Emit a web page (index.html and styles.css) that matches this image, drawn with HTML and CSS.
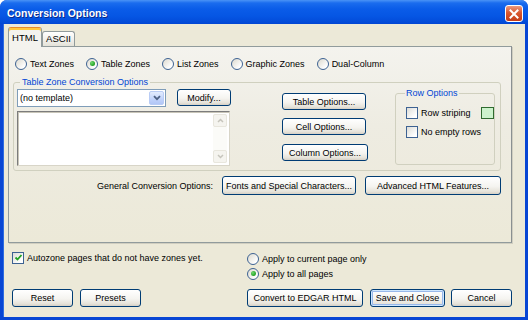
FILE: index.html
```html
<!DOCTYPE html>
<html lang="en">
<head>
  <meta charset="UTF-8" />
  <title>Conversion Options</title>
  <link rel="stylesheet" href="styles.css">
</head>
<body>

<div class="window">
  <div class="titlebar">
    <span class="title">Conversion Options</span>
    <button class="close-btn" title="Close">
      <svg width="10" height="10" viewBox="0 0 10 10"><path d="M1.5 1.5l7 7M8.5 1.5l-7 7" stroke="#fff" stroke-width="2" stroke-linecap="square"/></svg>
    </button>
  </div>

  <div class="client">
    <div class="tabs">
      <div class="tab active">HTML</div>
      <div class="tab">ASCII</div>
    </div>

    <div class="panel">
      <!-- zone type -->
      <div class="zone-row">
        <label class="radio"><span class="radio-dot"></span>Text Zones</label>
        <label class="radio checked"><span class="radio-dot"></span>Table Zones</label>
        <label class="radio"><span class="radio-dot"></span>List Zones</label>
        <label class="radio"><span class="radio-dot"></span>Graphic Zones</label>
        <label class="radio"><span class="radio-dot"></span>Dual-Column</label>
      </div>

      <fieldset class="group zone-group">
        <legend>Table Zone Conversion Options</legend>
        <div class="group-body">
          <div class="template-col">
            <div class="template-row">
              <div class="combo">
                <span>(no template)</span>
                <span class="combo-btn">
                  <svg width="8" height="6" viewBox="0 0 8 6"><path d="M1 1.2l3 3 3-3" stroke="#4D6185" stroke-width="1.8" fill="none"/></svg>
                </span>
              </div>
              <button class="btn modify-btn">Modify...</button>
            </div>
            <div class="textbox">
              <div class="scrollbar">
                <span class="sb-btn"><svg width="7" height="5" viewBox="0 0 7 5"><path d="M1 4l2.5-2.5L6 4" stroke="#C6C4BC" stroke-width="1.5" fill="none"/></svg></span>
                <span class="sb-btn"><svg width="7" height="5" viewBox="0 0 7 5"><path d="M1 1l2.5 2.5L6 1" stroke="#C6C4BC" stroke-width="1.5" fill="none"/></svg></span>
              </div>
            </div>
          </div>

          <div class="option-btns">
            <button class="btn table-btn">Table Options...</button>
            <button class="btn cell-btn">Cell Options...</button>
            <button class="btn column-btn">Column Options...</button>
          </div>

          <fieldset class="group row-group">
            <legend>Row Options</legend>
            <label class="check"><span class="box"></span>Row striping<span class="swatch"></span></label>
            <label class="check"><span class="box"></span>No empty rows</label>
          </fieldset>
        </div>
      </fieldset>

      <div class="general-row">
        <span class="general-label">General Conversion Options:</span>
        <button class="btn fonts-btn">Fonts and Special Characters...</button>
        <button class="btn advanced-btn">Advanced HTML Features...</button>
      </div>
    </div>

    <div class="bottom-options">
      <label class="check checked autozone">
        <span class="box"><svg width="9" height="9" viewBox="0 0 9 9"><path d="M1.5 4.5l2 2 4-4.5" stroke="#21A121" stroke-width="1.8" fill="none"/></svg></span>
        Autozone pages that do not have zones yet.
      </label>
      <div class="apply-radios">
        <label class="radio"><span class="radio-dot"></span>Apply to current page only</label>
        <label class="radio checked"><span class="radio-dot"></span>Apply to all pages</label>
      </div>
    </div>

    <div class="bottom-btns">
      <button class="btn reset-btn">Reset</button>
      <button class="btn presets-btn">Presets</button>
      <button class="btn convert-btn">Convert to EDGAR HTML</button>
      <button class="btn save-btn">Save and Close</button>
      <button class="btn cancel-btn">Cancel</button>
    </div>
  </div>
</div>

</body>
</html>
```

FILE: styles.css
```css
* {
  box-sizing: border-box;
}
body {
  margin: 0;
  font-family: "Liberation Sans", Arial, sans-serif;
  font-size: 9px;
  color: #000;
  background: #fff;
}
.window {
  width: 528px;
  height: 320px;
  background: #0846D4;
  border-radius: 7px 7px 0 0;
  display: flex;
  flex-direction: column;
}
.titlebar {
  height: 24px;
  display: flex;
  justify-content: space-between;
  align-items: flex-start;
  padding: 0 5px 0 7px;
  border-radius: 7px 7px 0 0;
  background: linear-gradient(to bottom, #4A93F6 0, #1A6CEE 3px, #0A5CE8 9px, #0656E4 16px, #034CD9 22px, #0246D2 24px);
}
.title {
  margin-top: 7px;
  line-height: 13px;
  font-size: 10.5px;
  font-weight: bold;
  color: #fff;
  text-shadow: 1px 1px 0 #0A2A8A;
}
.close-btn {
  margin-top: 5px;
  width: 18px;
  height: 17px;
  padding: 0;
  border: 1px solid #fff;
  border-radius: 3px;
  background: linear-gradient(to bottom, #EB9A80, #D9572F 45%, #C43C17);
  display: flex;
  align-items: center;
  justify-content: center;
}
.client {
  flex: 1;
  margin: 0 3px 3px;
  padding: 3px 13px 0 4px;
  background: #ECE9D8;
  border-left: 1px solid #2E6CE0;
}

/* tabs */
.tabs {
  display: flex;
  height: 19px;
  align-items: flex-end;
}
.tab {
  height: 15px;
  width: 33px;
  line-height: 14px;
  text-align: center;
  border: 1px solid #919B9C;
  border-bottom: none;
  border-radius: 3px 3px 0 0;
  background: linear-gradient(to bottom, #FFFFFF, #F0EFEA 60%, #E4E2D8);
  font-size: 9.5px;
}
.tab.active {
  position: relative;
  z-index: 1;
  width: 34px;
  height: 20px;
  margin-bottom: -1px;
  line-height: 18px;
  background: #F4F3EE;
  border-top: 1px solid #E68B2C;
  box-shadow: inset 0 2px 0 #FFC83C;
  padding-top: 1px;
}
.panel {
  height: 197px;
  border: 1px solid #919B9C;
  border-right-color: #8A9091;
  box-shadow: 1px 1px 0 #D0CEC0;
  background: linear-gradient(to bottom, #F4F3EE, #EEECE2 40%, #ECE9D8);
  padding: 10px 10px 0 6px;
}

/* radios and checks */
.zone-row {
  display: flex;
  gap: 12px;
  height: 13px;
  align-items: center;
}
.radio,
.check {
  display: flex;
  align-items: center;
  gap: 3px;
  height: 13px;
  white-space: nowrap;
}
.radio-dot {
  width: 12px;
  height: 12px;
  border: 1px solid #3D6292;
  border-radius: 50%;
  background: linear-gradient(135deg, #DCD9CE, #FFFFFF 80%);
  display: flex;
  align-items: center;
  justify-content: center;
}
.radio.checked .radio-dot::after {
  content: "";
  width: 5px;
  height: 5px;
  border-radius: 50%;
  background: radial-gradient(circle at 35% 35%, #6FD86F, #21A121 70%);
}
.box {
  width: 12px;
  height: 12px;
  border: 1px solid #3D6292;
  background: linear-gradient(135deg, #DCDCD7, #FFFFFF 80%);
  display: flex;
  align-items: center;
  justify-content: center;
}

/* group boxes */
.group {
  margin: 0;
  border: 1px solid #D0D0BF;
  border-radius: 3px;
}
.group legend {
  color: #0046D5;
  line-height: 12px;
  padding: 0 2px;
}
.zone-group {
  margin: 6px 0 0 -2px;
  width: 488px;
  height: 95px;
  padding: 1px 0 0 3px;
}
.zone-group legend {
  margin-left: 3px;
}
.group-body {
  display: flex;
  align-items: flex-start;
}
.template-col {
  width: 214px;
}
.template-row {
  display: flex;
  align-items: flex-start;
}
.combo {
  width: 149px;
  height: 18px;
  margin-right: 11px;
  border: 1px solid #7F9DB9;
  background: #fff;
  display: flex;
  align-items: center;
  justify-content: space-between;
  padding: 0 1px 0 2px;
}
.combo-btn {
  width: 15px;
  height: 14px;
  border: 1px solid #B9CCF5;
  border-radius: 2px;
  background: linear-gradient(to bottom, #E3ECFE, #C1D3FB 60%, #B2C7F6);
  display: flex;
  align-items: center;
  justify-content: center;
}
.textbox {
  width: 213px;
  height: 55px;
  margin-top: 4px;
  background: #fff;
  border: 1px solid;
  border-color: #7C7C7C #D8D5C8 #D8D5C8 #7C7C7C;
  box-shadow: inset 1px 1px 0 #C8C5B8;
  display: flex;
  justify-content: flex-end;
  padding: 2px;
}
.scrollbar {
  width: 14px;
  background: #FBFBF8;
  display: flex;
  flex-direction: column;
  justify-content: space-between;
}
.sb-btn {
  height: 13px;
  border: 1px solid #E8E6DD;
  border-radius: 2px;
  background: #F5F4EF;
  display: flex;
  align-items: center;
  justify-content: center;
}

/* buttons */
.btn {
  font-family: inherit;
  font-size: 9px;
  color: #000;
  height: 17px;
  padding: 0;
  border: 1px solid #003C74;
  border-radius: 3px;
  background: linear-gradient(to bottom, #FFFFFF, #F5F4F0 55%, #E6E3DA 85%, #D6D0C5);
  white-space: nowrap;
}
.modify-btn {
  width: 54px;
}
.option-btns {
  margin-left: 51px;
  padding-top: 4px;
  display: flex;
  flex-direction: column;
  align-items: flex-start;
  gap: 8px;
}
.table-btn,
.cell-btn {
  width: 84px;
}
.column-btn {
  width: 86px;
  margin-top: 1px;
}
.row-group {
  margin: -2px 0 0 27px;
  width: 99px;
  height: 78px;
  padding: 7px 0 0 10px;
  display: flex;
  flex-direction: column;
  gap: 6px;
}
.row-group legend {
  margin-left: -1px;
  padding: 0 1px;
}
.swatch {
  width: 13px;
  height: 12px;
  margin-left: 7px;
  border: 1px solid #2F6B2F;
  background: #CCF2CC;
}
.general-row {
  margin-top: 5px;
  display: flex;
  justify-content: flex-end;
  align-items: center;
}
.general-label {
  margin-right: 9px;
}
.fonts-btn {
  width: 134px;
  height: 19px;
}
.advanced-btn {
  width: 136px;
  height: 19px;
  margin-left: 9px;
}

/* bottom part */
.bottom-options {
  margin-top: 8px;
  display: flex;
  align-items: flex-start;
}
.autozone {
  width: 235px;
  margin-left: 4px;
}
.apply-radios {
  margin-top: 1px;
  display: flex;
  flex-direction: column;
  gap: 2px;
}
.bottom-btns {
  margin-top: 9px;
  display: flex;
}
.bottom-btns .btn {
  height: 18px;
}
.reset-btn {
  width: 61px;
  margin-left: 4px;
}
.presets-btn {
  width: 61px;
  margin-left: 7px;
}
.convert-btn {
  width: 116px;
  margin-left: auto;
}
.save-btn {
  width: 75px;
  margin-left: 7px;
  box-shadow: inset 0 0 0 1px #CEE7FF, inset 0 0 0 2px #98B8EA;
}
.cancel-btn {
  width: 61px;
  margin-left: 6px;
}
```
